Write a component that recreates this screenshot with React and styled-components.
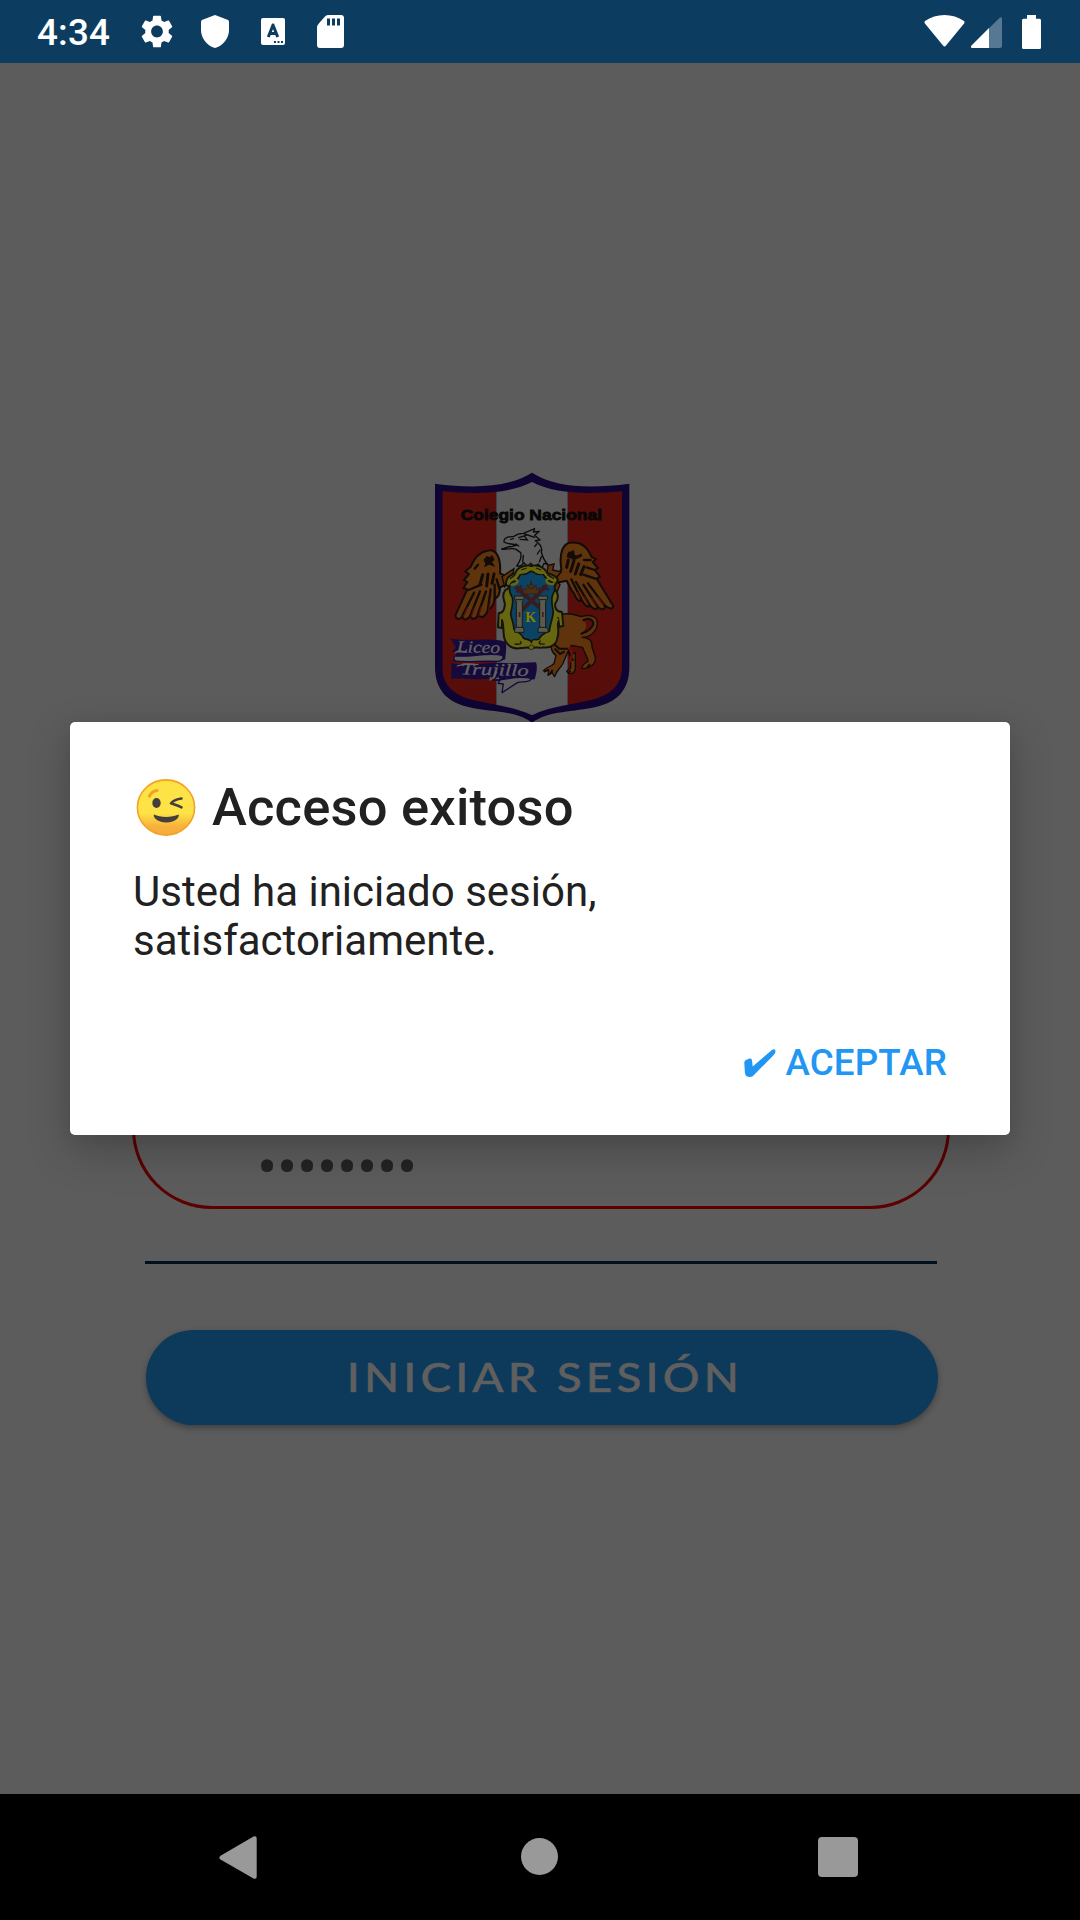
import React from "react";
import styled, { createGlobalStyle } from "styled-components";

const GlobalStyle = createGlobalStyle`
  * { box-sizing: border-box; }
  body { margin: 0; background: #5c5c5c; font-family: Roboto, "Noto Sans", sans-serif; }
`;

const Screen = styled.div`
  position: relative;
  display: flex;
  flex-direction: column;
  width: 1080px;
  height: 1920px;
  overflow: hidden;
  background: #5c5c5c;
`;

const StatusBar = styled.header`
  display: flex;
  align-items: center;
  justify-content: space-between;
  height: 63px;
  flex: none;
  padding: 0 39px 0 37px;
  background: #0d3c61;
`;

const StatusGroup = styled.div`
  display: flex;
  align-items: center;
  gap: ${(p) => p.$gap}px;
`;

const Clock = styled.span`
  width: 76px;
  font-size: 36.75px;
  line-height: 42px;
  font-weight: 500;
  letter-spacing: 0.2px;
  color: #fff;
  padding-top: 3px;
  white-space: nowrap;
`;

const Glyph = styled.svg`
  display: block;
  flex: none;
  overflow: visible;
`;

const Login = styled.main`
  display: flex;
  flex-direction: column;
  align-items: center;
  flex: 1;
  padding-top: 397px;
`;

const CrestFrame = styled.div`
  width: 230px;
  height: 270px;
  margin-right: 10px;
`;

const PasswordField = styled.div`
  display: flex;
  align-items: center;
  width: 818px;
  height: 165px;
  margin: 314px 0 0 2px;
  padding: 82px 0 0 122px;
  border: 3px solid #5c0000;
  border-radius: 80px;
`;

const Dots = styled.span`
  font-size: 60px;
  line-height: 42px;
  letter-spacing: -0.25px;
  color: #232323;
`;

const Divider = styled.div`
  width: 792px;
  height: 3px;
  margin: 52px 0 0 2px;
  background: #00101f;
`;

const LoginButton = styled.button`
  display: flex;
  align-items: center;
  justify-content: center;
  width: 792px;
  height: 95px;
  margin: 66px 0 0 4px;
  padding: 0 0 2px 6px;
  border: 0;
  border-radius: 48px;
  background: #0d395b;
  box-shadow: 0 3px 6px rgba(0, 0, 0, 0.3);
`;

const LoginLabel = styled.span`
  font-family: Lato, sans-serif;
  font-size: 41px;
  line-height: 48px;
  font-weight: 500;
  letter-spacing: 3.7px;
  color: #5f5f5f;
  -webkit-text-stroke: 0.5px #5f5f5f;
  white-space: nowrap;
  transform: scaleX(1.12);
`;

const Overlay = styled.div`
  position: absolute;
  inset: 0;
  display: flex;
  flex-direction: column;
  align-items: center;
  padding-top: 722px;
`;

const Dialog = styled.section`
  display: flex;
  flex-direction: column;
  width: 940px;
  height: 413px;
  padding: 51px 63px 0 63px;
  border-radius: 5px;
  background: #fff;
  color: #212121;
  box-shadow: 0 16px 44px rgba(0, 0, 0, 0.22), 0 2px 18px rgba(0, 0, 0, 0.06);
`;

const DialogTitle = styled.h1`
  display: flex;
  align-items: center;
  gap: 16px;
  height: 68px;
  margin: 0;
  padding-left: 4px;
  font-size: 52.5px;
  line-height: 62px;
  font-weight: 500;
  letter-spacing: 0.2px;
  white-space: nowrap;
`;

const DialogText = styled.p`
  margin: 26px 0 0;
  font-size: 42px;
  line-height: 49px;
  white-space: nowrap;
`;

const DialogActions = styled.div`
  display: flex;
  justify-content: flex-end;
  margin-top: 76px;
`;

const AcceptButton = styled.button`
  display: flex;
  align-items: center;
  gap: 9px;
  padding: 0;
  border: 0;
  background: none;
  color: #2196f3;
  font-family: inherit;
  font-size: 36.75px;
  line-height: 43px;
  font-weight: 500;
  letter-spacing: 0.15px;
`;

const NavBar = styled.nav`
  display: flex;
  align-items: center;
  justify-content: space-between;
  flex: none;
  height: 126px;
  padding: 0 222px 0 219px;
  background: #000;
`;

function Crest() {
  return (
    <CrestFrame>
      <Glyph width="230" height="270" viewBox="0 0 690 810">
        <defs>
          <clipPath id="field">
            <path d="M336 66C270 100 180 104 67 94V620C67 672 96 700 150 718C210 734 280 738 336 766C392 738 462 734 522 718C578 700 606 672 606 620V94C490 104 402 100 336 66Z" />
          </clipPath>
        </defs>
        <path fill="#100532" d="M336 38C270 80 170 88 45 71V620C45 690 82 725 142 740C210 757 285 750 336 788C387 750 462 757 530 740C592 725 628 690 628 620V71C500 88 402 80 336 38Z" />
        <g clipPath="url(#field)">
          <path fill="#570e0b" d="M60 60H229V790H60ZM443 60H610V790H443Z" />
          <path fill="#5c5c5c" d="M229 60H443V790H229Z" />
        </g>
        <text x="122" y="179" textLength="424" lengthAdjust="spacingAndGlyphs" fontFamily="Liberation Sans" fontWeight="700" fontSize="46" fill="#080706" stroke="#080706" strokeWidth="2.4">Colegio Nacional</text>

        {/* wings */}
        <g fill="#5f340c" stroke="#120b08" strokeWidth="6" strokeLinejoin="round">
          <path d="M240 340C244 288 226 266 203 272C176 276 160 300 151 322L136 334L147 342L132 360L142 366L130 384L142 388L106 466C108 480 120 480 128 468C128 482 142 482 152 466C154 480 168 480 174 464C184 478 198 470 204 448C216 446 222 430 224 416C238 412 240 392 240 382L262 372L268 352Z" />
          <path d="M410 352L424 328C418 290 424 252 450 248C484 244 504 264 514 290L528 298L518 306L534 324L524 330L540 350L530 356L580 438C578 450 564 446 552 434C560 450 544 454 530 436C538 450 522 454 506 430C514 446 498 446 482 414C486 428 472 426 462 400C452 392 446 372 440 362L404 370Z" />
        </g>
        <g fill="none" stroke="#120b08" strokeLinecap="round">
          <path strokeWidth="7" d="M146 390L184 374M128 466L162 398M151 466L180 394M174 462L198 394M204 446L212 388M224 416L224 374M238 386L230 358M164 326L174 314M512 300L492 300M524 330L500 322M526 356L490 344M552 434L504 370M530 436L490 374M506 430L468 366M482 414L454 358" />
          <path strokeWidth="9" d="M180 374L188 344M200 378L204 342M216 370L222 342M440 322L445 300M452 334L462 302M466 342L476 312M482 344L492 320M446 284L458 276M466 294L482 286" />
        </g>
        <path fill="none" stroke="#570e0b" strokeWidth="4" strokeLinecap="round" d="M130 470L142 442M153 470L162 446M176 466L184 440M206 450L210 426M550 434L534 412M528 438L514 414M504 432L492 410M480 414L472 398" />
        <path fill="#120b08" d="M190 300L200 288L210 292L216 284L224 300L216 306L226 320L207 314L192 322L196 310ZM440 292L446 274L454 280L462 270L464 284L474 288L460 300L450 294Z" />
        <path fill="#5f340c" stroke="#120b08" strokeWidth="4" d="M246 350L282 326L276 352L254 380ZM384 316L402 312L398 330L424 336L404 358L420 374L410 398L380 348Z" />

        {/* lion body */}
        <g fill="#5f340c" stroke="#120b08" strokeWidth="4" strokeLinejoin="round">
          <path d="M424 464C446 456 470 466 484 470C510 462 534 468 532 492C530 516 508 532 486 532C510 534 518 544 516 562L526 592C528 612 512 624 486 626C486 612 494 612 504 604C504 590 492 578 488 562L454 556L440 584L428 612C420 626 410 630 404 650L396 638L384 646L386 632L370 632C380 620 396 620 402 610L408 586C392 576 392 558 396 548L410 536L412 500Z" />
          <path d="M452 584L466 578V626C464 642 450 646 440 634L452 624Z" />
        </g>
        <path fill="#570e0b" d="M490 481C508 474 522 478 521 492C518 507 502 515 486 518C500 506 504 494 490 481Z" />
        <path fill="none" stroke="#120b08" strokeWidth="6" d="M488 482C508 470 520 480 520 492C516 508 500 516 482 522M398 548L418 566L444 566M404 566L420 582L434 574M372 636L386 628M390 642L398 630M444 640L452 632M502 622L510 612M444 574L460 602" />
        <path fill="none" stroke="#67100d" strokeWidth="7" d="M449 560L456 584L450 606" />

        {/* eagle head */}
        <path fill="#5e5e5e" stroke="#0c0c0c" strokeWidth="4" strokeLinejoin="round" d="M290 318C300 304 306 292 302 278L288 268C276 262 264 270 246 268L266 260C278 262 284 254 290 256C278 250 264 254 252 246C250 236 262 228 280 230C288 224 298 220 310 220L344 206L340 216L358 214L344 226L360 240L346 242C360 252 368 264 364 276C368 292 374 304 384 314L372 310L366 324L354 312L344 322L332 310L322 320L312 308L302 318Z" />
        <path fill="none" stroke="#0c0c0c" strokeWidth="4" strokeLinecap="round" d="M296 233L318 226M300 238L322 240L314 230M246 267L260 264M314 222L344 232M350 252L344 260M360 270L352 282M310 286L308 306M364 290L358 306M272 238L280 236M288 252L296 258" />

        {/* oval coat of arms */}
        <path fill="#686610" stroke="#15140a" strokeWidth="6" strokeLinejoin="round" d="M334 318C316 314 290 322 286 340C272 344 256 352 258 376C274 378 264 388 256 390C240 410 258 424 254 438C252 450 250 458 236 460L234 502L246 504L246 480C254 500 246 532 258 546C268 562 284 568 304 564C312 566 320 558 334 566C346 558 358 566 370 562C392 566 410 552 412 534C420 510 410 500 414 474L418 500L430 498L426 456C406 454 404 440 406 430C420 412 412 394 404 388C398 380 406 378 414 360C406 342 390 344 380 338C372 318 348 314 334 318Z" />
        <path fill="#0c4262" stroke="#131309" strokeWidth="5" d="M304 340C318 350 326 334 334 334C344 334 352 352 366 340C376 348 378 360 390 364C410 370 406 392 398 404C392 420 396 436 400 454C400 474 390 488 388 514C370 520 362 526 356 538C344 542 340 532 334 546C328 534 320 542 310 534C306 522 292 516 282 508C282 488 272 474 272 460C276 442 282 424 276 410C264 392 266 370 282 364C296 360 296 350 304 340Z" />
        <path fill="none" stroke="#686610" strokeWidth="7" strokeLinecap="round" d="M275 374C290 374 300 362 286 358M326 323C328 334 306 340 296 338M342 323C342 336 360 340 374 338M400 372C382 374 372 362 386 356M254 480C266 488 256 518 266 538M412 478C400 494 408 522 394 540M286 544C310 538 312 558 292 556M382 542C360 538 356 556 374 554" />
        <path fill="none" stroke="#17170a" strokeWidth="4" d="M284 552C296 554 310 552 300 544M374 552C360 554 352 550 362 542M320 324L304 330M348 324L364 330M286 344L270 356M382 344L402 356" />
        <circle cx="334" cy="562" r="7" fill="#686610" stroke="#17170a" strokeWidth="2" />
        <g stroke="#391b20" strokeWidth="12">
          <path d="M286 380L372 454M380 376L306 450" />
          <path strokeWidth="7" d="M290 398L304 376M366 378L386 390" />
        </g>
        <g fill="#4d2f14" stroke="#2b1b18" strokeWidth="2">
          <path d="M312 402L306 384L318 390L322 374L330 386L333 362L338 386L348 374L349 390L360 382L354 402Z" />
          <circle cx="333" cy="380" r="7" />
        </g>
        <g fill="#5c5b4b" stroke="#171b1c" strokeWidth="3">
          <path d="M284 408H312V418L307 424V502L312 507V517H284V507L289 502V424L284 418ZM354 408H382V418L377 424V502L384 507V517H354V507L359 502V424L354 418Z" />
          <path fill="none" d="M286 419H309M288 502H310M356 419H380M356 502H380" />
        </g>
        <path fill="#481d18" d="M296 456H301V471H296ZM366 456H371V471H366Z" />
        <text x="316" y="485" fontFamily="Liberation Serif" fontWeight="700" fontSize="42" fill="#858000">K</text>

        {/* name ribbon */}
        <g fill="#150a3b">
          <path d="M91 534C130 548 205 530 256 545C262 556 256 584 256 598L230 607C182 603 140 609 98 604L110 580L96 574L108 563Z" />
          <path d="M94 609C142 622 220 602 270 610L348 607C354 622 348 646 344 658L244 670L236 652C184 664 138 652 94 656Z" />
        </g>
        <path fill="#5e5e5e" stroke="#150a3b" strokeWidth="4" strokeLinejoin="round" d="M106 588C150 592 206 576 246 586C254 592 246 604 232 604C184 601 132 609 104 602C100 594 102 590 106 588ZM220 660L240 662L234 670L250 672L246 698L292 668C306 664 330 668 332 658C332 652 320 652 300 652C276 652 250 660 220 660Z" />
        <g fill="#646464" stroke="#646464" strokeWidth=".8" fontFamily="Liberation Serif" fontStyle="italic" fontWeight="400" fontSize="50">
          <text x="110" y="577" textLength="130" lengthAdjust="spacingAndGlyphs" transform="rotate(1 108 578)">Liceo</text>
          <text x="122" y="643" textLength="204" lengthAdjust="spacingAndGlyphs" transform="rotate(1.500 120 644)">Trujillo</text>
        </g>
        <path fill="none" stroke="#646464" strokeWidth="4" strokeLinecap="round" d="M106 578C116 566 126 576 140 576M112 618C132 608 152 616 174 613M210 660C220 656 224 646 230 636" />
      </Glyph>
    </CrestFrame>
  );
}

function WinkFace() {
  return (
    <Glyph width="59" height="57" viewBox="0 0 59 57">
      <defs>
        <linearGradient id="skin" x1="0" y1="0" x2="0" y2="1">
          <stop offset="0" stopColor="#fde030" />
          <stop offset=".1" stopColor="#fee347" />
          <stop offset=".6" stopColor="#fee347" />
          <stop offset=".84" stopColor="#f8b23b" />
          <stop offset="1" stopColor="#f6a93b" />
        </linearGradient>
      </defs>
      <ellipse cx="29" cy="28.5" rx="28.6" ry="27.6" fill="url(#skin)" stroke="#f2a225" strokeWidth="1.6" />
      <path d="M12.5 17C14 14 16.500 12 20 11.500" fill="none" stroke="#f2a225" strokeWidth="3.200" strokeLinecap="round" />
      <ellipse cx="19.500" cy="24" rx="4.200" ry="5" fill="#423f3c" />
      <path d="M44.500 19.500C40 20 36 22 34 24.300C37 25.500 41 26.500 44.500 28.300" fill="none" stroke="#423f3c" strokeWidth="2.600" strokeLinecap="round" strokeLinejoin="round" />
      <path d="M17 35.500C23 38.700 35 38.700 41.500 35.500C43 37.500 39 43.500 29.300 43.500C20 43.500 15.500 37.500 17 35.500Z" fill="#423f3c" />
    </Glyph>
  );
}

export default function App() {
  return (
    <Screen>
      <GlobalStyle />
      <StatusBar>
        <StatusGroup $gap={28}>
          <Clock>4:34</Clock>
          <Glyph width="32" height="33" viewBox="2.200 2 19.600 20" preserveAspectRatio="none" fill="#fff">
            <path d="M19.140 12.940c.04-.3.06-.61.06-.94 0-.32-.02-.64-.07-.94l2.030-1.580c.18-.14.23-.41.12-.61l-1.920-3.320c-.12-.22-.37-.29-.59-.22l-2.390.96c-.5-.38-1.030-.7-1.620-.94l-.36-2.540c-.04-.24-.24-.41-.48-.41h-3.840c-.24 0-.43.17-.47.41l-.36 2.540c-.59.24-1.130.57-1.620.94l-2.390-.96c-.22-.08-.47 0-.59.22L2.740 8.870c-.12.21-.08.47.12.61l2.030 1.580c-.05.3-.09.63-.09.94s.02.64.07.94l-2.030 1.580c-.18.14-.23.41-.12.61l1.920 3.320c.12.22.37.29.59.22l2.390-.96c.5.38 1.030.7 1.620.94l.36 2.540c.05.24.24.41.48.41h3.840c.24 0 .44-.17.47-.41l.36-2.540c.59-.24 1.130-.56 1.620-.94l2.390.96c.22.08.47 0 .59-.22l1.920-3.320c.12-.22.07-.47-.12-.61l-2.010-1.580zM12 15.600c-1.980 0-3.600-1.620-3.600-3.600s1.620-3.600 3.600-3.600 3.600 1.620 3.600 3.600-1.620 3.600-3.600 3.600z" />
          </Glyph>
          <Glyph width="28" height="33" viewBox="0 0 28 33" fill="#fff">
            <path d="M14 0L26.500 4.800Q28 5.400 28 7V15C28 23 22 31 14 33C6 31 0 23 0 15V7Q0 5.400 1.500 4.800Z" />
          </Glyph>
          <Glyph width="32" height="33" viewBox="-4 -3 32 33">
            <rect width="24" height="27" rx="2" fill="#fff" />
            <path d="M7.300 19L12 7L16.700 19M9 15.500H15" fill="none" stroke="#0d3c61" strokeWidth="3" strokeLinejoin="round" />
            <path d="M13 23h2v2h-2zM16.500 23h2v2h-2zM20 23h2v2h-2z" fill="#0d3c61" />
          </Glyph>
          <Glyph width="27" height="33" viewBox="0 0 27 33">
            <path d="M9.500 0H24Q27 0 27 3V30Q27 33 24 33H3Q0 33 0 30V13Q0 10.500 2 8.300L8 1.500Q9 0 11 0Z" fill="#fff" />
            <path d="M10 3.500h3v7h-3zM15 3.500h3v7h-3zM20 3.500h3v7h-3z" fill="#0d3c61" />
          </Glyph>
        </StatusGroup>
        <StatusGroup $gap={6}>
          <Glyph width="41" height="34" viewBox="0 0 41 34" fill="#fff">
            <path d="M1 6C12-2 29-2 40 6Q41 7 40.300 8.200L22 30.500Q20.500 32.500 19 30.500L.7 8.200Q0 7 1 6Z" />
          </Glyph>
          <Glyph width="31" height="34" viewBox="0 0 31 34">
            <path d="M29 2.500Q31 1.500 31 4V31Q31 33 29 33H18V13.200Z" fill="#567892" />
            <path d="M18 13V33H1Q-.8 32.500.5 30.500Z" fill="#fff" />
          </Glyph>
          <Glyph width="33" height="34" viewBox="-14 0 33 34" fill="#fff">
            <path d="M5 0H14V3.700H17.500Q19 3.700 19 5.200V32.500Q19 34 17.500 34H1.500Q0 34 0 32.500V5.200Q0 3.700 1.500 3.700H5Z" />
          </Glyph>
        </StatusGroup>
      </StatusBar>

      <Login>
        <Crest />
        <PasswordField>
          <Dots>••••••••</Dots>
        </PasswordField>
        <Divider />
        <LoginButton>
          <LoginLabel>INICIAR SESIÓN</LoginLabel>
        </LoginButton>
      </Login>

      <NavBar>
        <Glyph width="38" height="43" viewBox="0 0 38 43" fill="#999">
          <path d="M34.500.6Q37.700-.8 37.700 2.500V40.500Q37.700 43.800 34.500 42.400L1.500 23.500Q-.8 21.700 1.500 19.800Z" />
        </Glyph>
        <Glyph width="38" height="38" viewBox="-1.500 0 38 38" fill="#999">
          <circle cx="19" cy="18.500" r="18.500" />
        </Glyph>
        <Glyph width="40" height="40" viewBox="0 0 40 40" fill="#999">
          <rect width="40" height="40" rx="4" />
        </Glyph>
      </NavBar>

      <Overlay>
        <Dialog role="dialog">
          <DialogTitle>
            <WinkFace />
            <span>Acceso exitoso</span>
          </DialogTitle>
          <DialogText>
            Usted ha iniciado sesión,
            <br />
            satisfactoriamente.
          </DialogText>
          <DialogActions>
            <AcceptButton>
              <Glyph width="32" height="29" viewBox="0 -1 32 29" fill="#2196f3">
                <path d="M.3 14Q0 11.500 2.500 10.700L5.500 9.600Q7.800 9 8 11.500L8.700 17.500L27.500 1.200Q31.500-1.200 31.500 2.500Q31.500 4.200 29.500 6.200L10.500 25.500Q8.500 28 6 28Q1.200 28 .9 23.500Z" />
              </Glyph>
              <span>ACEPTAR</span>
            </AcceptButton>
          </DialogActions>
        </Dialog>
      </Overlay>
    </Screen>
  );
}
